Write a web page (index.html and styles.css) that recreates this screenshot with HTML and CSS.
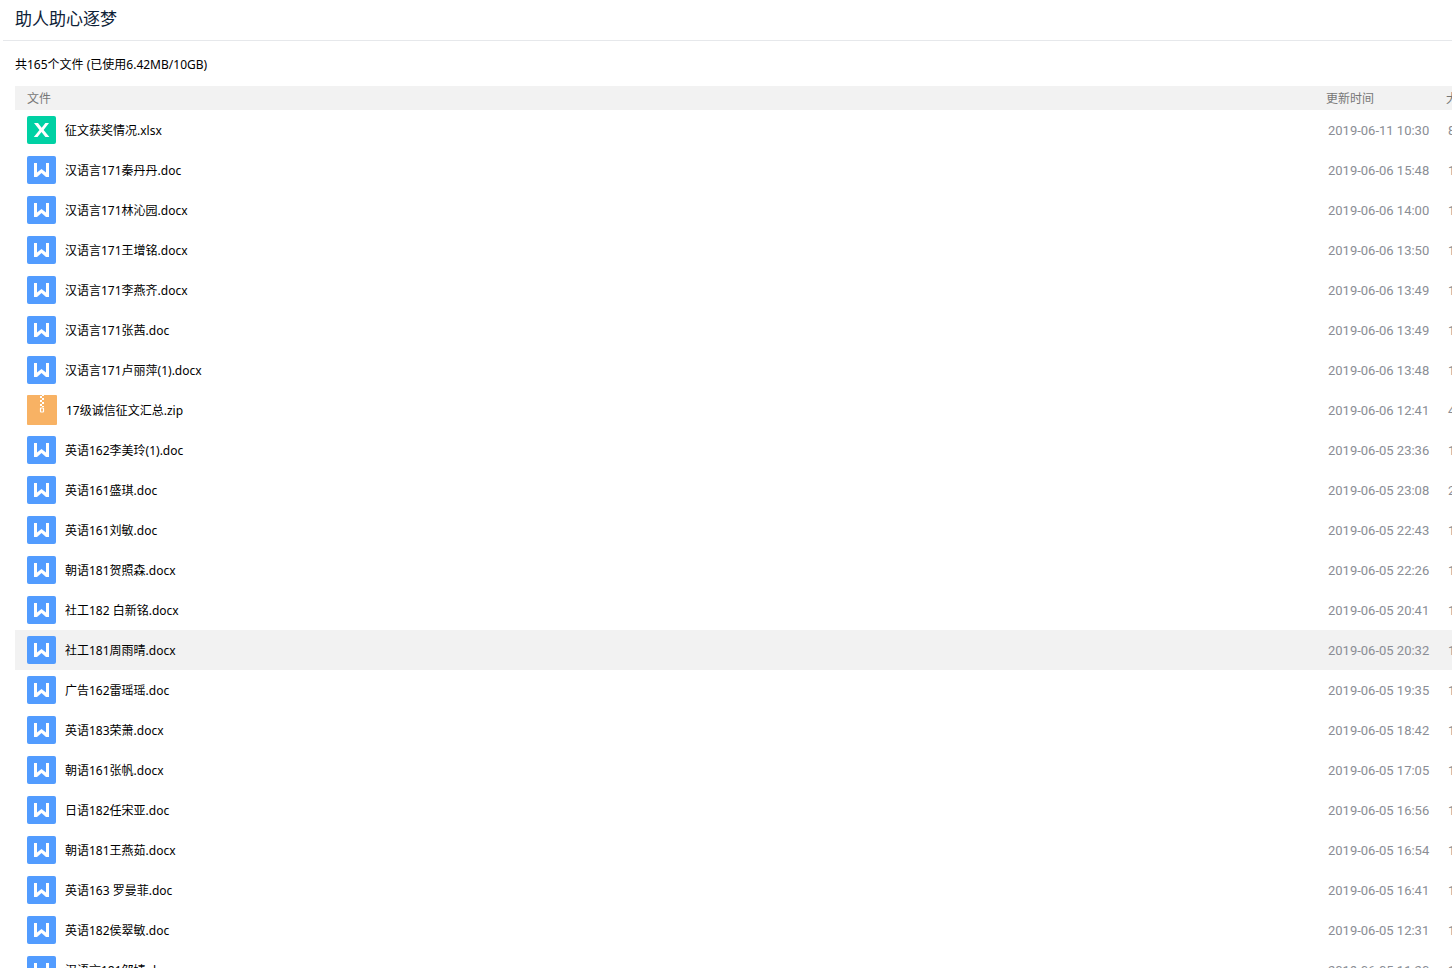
FILE: index.html
```
<!DOCTYPE html>
<html lang="zh-CN">
<head>
  <meta charset="UTF-8">
  <meta name="viewport" content="width=device-width, initial-scale=1.0">
  <title>助人助心逐梦</title>
  <link rel="stylesheet" href="styles.css">
</head>
<body>

  <!-- Shared icon shapes -->
  <svg class="sprite" aria-hidden="true">
    <symbol id="icon-doc" viewBox="0 0 29 28">
      <rect width="29" height="28" rx="2" fill="#529cff"/>
      <path d="M7 7h3v9.5l4.5-3.5 4.5 3.5V7h3v14h-3l-4.5-4-4.5 4H7z" fill="#fff"/>
    </symbol>
    <symbol id="icon-xls" viewBox="0 0 29 28">
      <rect width="29" height="28" rx="2" fill="#00d1a4"/>
      <path d="M7 7h4l3.7 4.8L18.4 7H22l-5.4 6.9L22.4 21h-4l-3.9-5-4 5H6.8l5.7-7.1z" fill="#fff"/>
    </symbol>
    <symbol id="icon-zip" viewBox="0 0 30 30">
      <rect width="30" height="30" rx="1" fill="#f8b264"/>
      <path d="M15 0h2v1h-2zM13 1h2v2h-2zM15 3h2v2h-2zM13 5h2v2h-2zM15 7h2v2h-2zM13 9h2v2h-2zM15 11h2v1h-2z" fill="#fff"/>
      <rect x="13.5" y="13" width="3" height="4" rx=".5" fill="none" stroke="#fff" stroke-width="1.2"/>
    </symbol>
  </svg>

  <div class="page">
    <header class="header">
      <h1>助人助心逐梦</h1>
    </header>

    <main class="content">
      <p class="summary">共165个文件 (已使用6.42MB/10GB)</p>

      <table class="files">
        <thead>
          <tr><th class="name">文件</th><th class="time">更新时间</th><th class="size">大小</th></tr>
        </thead>
        <tbody id="fileList"></tbody>
      </table>
    </main>
  </div>

  <script src="script.js"></script>
</body>
</html>
```

FILE: styles.css
```
body {
  margin: 0;
  background-color: #fff;
  color: #000;
  font-family: "Noto Sans", "Noto Sans CJK SC", sans-serif;
  font-size: 12px;
  line-height: 20px;
}

.sprite {
  display: none;
}

.page {
  height: 100vh;
  overflow: hidden;
}

.header {
  margin-left: 3px;
  padding: 7px 12px 9px;
  border-bottom: 1px solid #e6e8eb;
}

h1 {
  margin: 0;
  color: #0e2238;
  font-size: 17px;
  font-weight: normal;
  line-height: 24px;
}

.content {
  padding-left: 15px;
}

.summary {
  margin: 0;
  padding: 14px 0 11px;
}

/* the size column runs past the right edge of the window */
.files {
  width: calc(100% + 80px);
  border-collapse: collapse;
  table-layout: fixed;
}

th,
td {
  padding: 0;
  text-align: left;
  font-weight: normal;
  white-space: nowrap;
}

th {
  height: 22px;
  padding-top: 2px;
  background-color: #f2f2f2;
  color: #777;
}

td {
  height: 40px;
}

th.name {
  padding-left: 12px;
}

th.time {
  width: 120px;
}

th.size {
  width: 86px;
}

.file {
  display: flex;
  align-items: center;
  gap: 9px;
  padding-left: 12px;
}

.file span {
  padding-top: 2px;
}

.icon {
  width: 29px;
  height: 28px;
}

.icon-zip {
  width: 30px;
  height: 30px;
}

td.time,
td.size {
  height: 38px;
  padding: 2px 0 0 2px;
  color: #8a8d94;
  font-family: Roboto, "Noto Sans CJK SC", sans-serif;
  font-size: 13px;
}

tbody tr.active {
  background-color: #f2f2f2;
}
```

FILE: script.js
```
var files = [
  ['征文获奖情况.xlsx', '2019-06-11 10:30', '8.9KB'],
  ['汉语言171秦丹丹.doc', '2019-06-06 15:48', '16KB'],
  ['汉语言171林沁园.docx', '2019-06-06 14:00', '15KB'],
  ['汉语言171王增铭.docx', '2019-06-06 13:50', '15KB'],
  ['汉语言171李燕齐.docx', '2019-06-06 13:49', '14KB'],
  ['汉语言171张茜.doc', '2019-06-06 13:49', '16KB'],
  ['汉语言171卢丽萍(1).docx', '2019-06-06 13:48', '15KB'],
  ['17级诚信征文汇总.zip', '2019-06-06 12:41', '4MB'],
  ['英语162李美玲(1).doc', '2019-06-05 23:36', '16KB'],
  ['英语161盛琪.doc', '2019-06-05 23:08', '26KB'],
  ['英语161刘敏.doc', '2019-06-05 22:43', '16KB'],
  ['朝语181贺照森.docx', '2019-06-05 22:26', '14KB'],
  ['社工182 白新铭.docx', '2019-06-05 20:41', '15KB'],
  ['社工181周雨晴.docx', '2019-06-05 20:32', '14KB'],
  ['广告162雷瑶瑶.doc', '2019-06-05 19:35', '16KB'],
  ['英语183荣萧.docx', '2019-06-05 18:42', '14KB'],
  ['朝语161张帆.docx', '2019-06-05 17:05', '15KB'],
  ['日语182任宋亚.doc', '2019-06-05 16:56', '16KB'],
  ['朝语181王燕茹.docx', '2019-06-05 16:54', '14KB'],
  ['英语163 罗曼菲.doc', '2019-06-05 16:41', '16KB'],
  ['英语182侯翠敏.doc', '2019-06-05 12:31', '16KB'],
  ['汉语言181邹婧.doc', '2019-06-05 11:20', '16KB']
];
var activeFile = 13;

function iconFor(name) {
  if (name.endsWith('.zip')) return 'zip';
  if (name.endsWith('.xlsx')) return 'xls';
  return 'doc';
}

document.getElementById('fileList').innerHTML = files.map(function (f, i) {
  var icon = iconFor(f[0]);
  return '<tr' + (i === activeFile ? ' class="active"' : '') + '>' +
    '<td><div class="file"><svg class="icon icon-' + icon + '" aria-hidden="true"><use href="#icon-' + icon + '"/></svg>' +
    '<span>' + f[0] + '</span></div></td>' +
    '<td class="time">' + f[1] + '</td>' +
    '<td class="size">' + f[2] + '</td></tr>';
}).join('');
```
